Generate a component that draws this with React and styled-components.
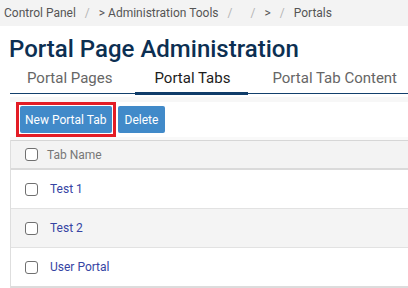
import styled, { createGlobalStyle } from "styled-components";

const GlobalStyle = createGlobalStyle`
  html, body {
    margin: 0;
    padding: 0;
    overflow: hidden;
    background: #fff;
    font-family: Roboto, "Liberation Sans", Arial, sans-serif;
  }
`;

const Page = styled.div`
  width: 408px;
  height: 288px;
  overflow: hidden;
`;

const Breadcrumbs = styled.nav`
  display: flex;
  align-items: center;
  height: 26px;
  padding-left: 4px;
  background: #f3f3f3;
  font-size: 12px;
  color: #555;
  white-space: pre;
`;

const Crumb = styled.span``;

const Separator = styled.span`
  margin: 0 9px;
  color: #b5b5b5;
`;

const Title = styled.h1`
  margin: 9px 0 0;
  padding-left: 9px;
  font-size: 24px;
  line-height: 28px;
  font-weight: 500;
  color: #0c2f52;
  white-space: nowrap;
`;

const TabList = styled.div`
  display: flex;
  margin-left: 10px;
  border-bottom: 1px solid #123f6c;
`;

const Tab = styled.div`
  position: relative;
  flex-shrink: 0;
  padding: 0 21px;
  line-height: 30px;
  font-size: 15px;
  white-space: nowrap;
  color: ${(p) => (p.$active ? "#1c1c1c" : "#666")};
  &:first-child {
    padding-left: 17px;
  }
  ${(p) =>
    p.$active &&
    `
    &::after {
      content: "";
      position: absolute;
      left: 2px;
      right: 3px;
      bottom: -2px;
      height: 3px;
      background: #0f3c69;
    }
  `}
`;

const Toolbar = styled.div`
  display: flex;
  align-items: center;
  gap: 2px;
  height: 35px;
  margin: 3px 0 0 10px;
  padding-left: 6px;
  border-top: 5px solid #f7f7f7;
  border-bottom: 3px solid #f9f9f9;
`;

const FocusRing = styled.span`
  display: flex;
  padding: 1px;
  border: 3px solid #e31c25;
`;

const Button = styled.button`
  height: 27px;
  padding: 0 ${(p) => (p.$wide ? "5px" : "7px")};
  border: none;
  border-radius: 2px;
  background: #418ac9;
  color: #fff;
  font-family: Roboto, "Liberation Sans", Arial, sans-serif;
  font-size: 12px;
  white-space: nowrap;
`;

const Table = styled.div`
  margin-left: 10px;
  border-left: 1px solid #dedede;
`;

const HeaderRow = styled.div`
  display: flex;
  align-items: center;
  height: 27px;
  background: #f3f3f3;
  border-top: 1px solid #d6d6d6;
  border-bottom: 2px solid #dadada;
  font-size: 12px;
  color: #777;
`;

const Row = styled.div`
  display: flex;
  align-items: center;
  height: 38px;
  background: ${(p) => (p.$striped ? "#f4f4f4" : "#fff")};
  border-bottom: ${(p) => (p.$last ? "2px solid #dcdcdc" : "1px solid #e2e2e2")};
  font-size: 12px;
`;

const Checkbox = styled.span`
  box-sizing: border-box;
  width: 13px;
  height: 13px;
  margin-left: 14px;
  margin-right: ${(p) => (p.$header ? "9px" : "12px")};
  border: 1px solid #707070;
  border-radius: 3px;
  background: #fff;
`;

const TabLink = styled.a`
  color: #3644a3;
  text-decoration: none;
`;

const crumbs = ["Control Panel", "> Administration Tools", "", ">", "Portals"];
const tabs = ["Portal Pages", "Portal Tabs", "Portal Tab Content"];
const rows = ["Test 1", "Test 2", "User Portal"];

export default function App() {
  return (
    <Page>
      <GlobalStyle />
      <Breadcrumbs>
        {crumbs.map((c, i) => (
          <Crumb key={`crumb${i}`}>
            {c}
            {i < crumbs.length - 1 && <Separator>/</Separator>}
          </Crumb>
        ))}
      </Breadcrumbs>
      <Title>Portal Page Administration</Title>
      <TabList>
        {tabs.map((t) => (
          <Tab key={t} $active={t === "Portal Tabs"}>
            {t}
          </Tab>
        ))}
      </TabList>
      <Toolbar>
        <FocusRing>
          <Button $wide>New Portal Tab</Button>
        </FocusRing>
        <Button>Delete</Button>
      </Toolbar>
      <Table>
        <HeaderRow>
          <Checkbox $header />
          Tab Name
        </HeaderRow>
        {rows.map((r, i) => (
          <Row key={r} $striped={i === 1} $last={i === rows.length - 1}>
            <Checkbox />
            <TabLink href="#">{r}</TabLink>
          </Row>
        ))}
      </Table>
    </Page>
  );
}
